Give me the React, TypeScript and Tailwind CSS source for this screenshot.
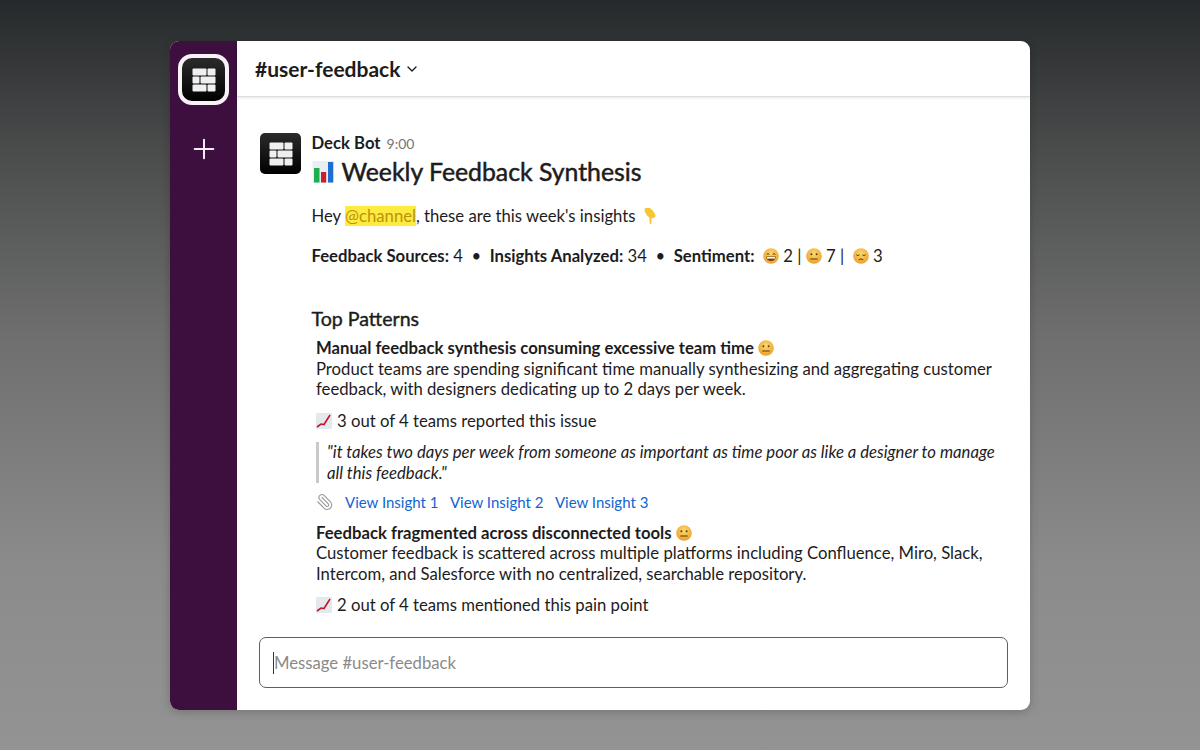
import React from "react";
import { ChevronDown, Paperclip, Plus } from "lucide-react";

// brick logo used in the workspace button and the bot avatar
const BrickLogo = ({ size }: { size: number }) => (
  <svg width={size} height={size} viewBox="0 0 24 24" fill="#f0f0f0">
    <rect x="0.5" y="0.5" width="14" height="7" rx="1" />
    <rect x="15.5" y="0.5" width="8" height="7" rx="1" />
    <rect x="0.5" y="8.5" width="7" height="7" rx="1" />
    <rect x="8.5" y="8.5" width="15" height="7" rx="1" />
    <rect x="0.5" y="16.5" width="14" height="7" rx="1" />
    <rect x="15.5" y="16.5" width="8" height="7" rx="1" />
  </svg>
);

const BarChartEmoji = ({ size = 22 }: { size?: number }) => (
  <svg width={size} height={size} viewBox="0 0 22 22" className="inline-block shrink-0">
    <rect x="0.5" y="0" width="21.5" height="22" fill="#e9eef3" />
    <rect x="2" y="7" width="5.5" height="14.5" fill="#1fae4e" />
    <rect x="9" y="11" width="5.2" height="10.5" fill="#c8202c" />
    <rect x="16" y="1" width="5.2" height="20.5" fill="#1f6fd0" />
  </svg>
);

const TrendEmoji = () => (
  <svg width="16" height="16" viewBox="0 0 16 16" className="inline-block shrink-0">
    <rect width="16" height="16" fill="#e4e9ee" />
    <path d="M1 14 L5 11 L8 11.5 L14 2" fill="none" stroke="#c2182b" strokeWidth="1.6" />
  </svg>
);

const Face = ({ kind }: { kind: "grin" | "neutral" | "pensive" }) => (
  <svg width="16" height="16" viewBox="0 0 16 16" className="inline-block shrink-0">
    <defs>
      <radialGradient id={`face-${kind}`} cx="50%" cy="35%" r="70%">
        <stop offset="0%" stopColor="#fbd971" />
        <stop offset="100%" stopColor="#ec9b22" />
      </radialGradient>
    </defs>
    <circle cx="8" cy="8" r="7.8" fill={`url(#face-${kind})`} />
    {kind === "grin" && (
      <>
        <path d="M3.6 6.4 Q5 4.8 6.4 6.4 M9.6 6.4 Q11 4.8 12.4 6.4" fill="none" stroke="#5b3a12" strokeWidth="1" />
        <path d="M3.2 8.6 H12.8 Q12.4 13 8 13 Q3.6 13 3.2 8.6Z" fill="#6b3d14" />
        <path d="M4 9 H12 V10.6 H4Z" fill="#fff" />
      </>
    )}
    {kind === "neutral" && (
      <>
        <circle cx="5.4" cy="6.2" r="1" fill="#5b3a12" />
        <circle cx="10.6" cy="6.2" r="1" fill="#5b3a12" />
        <rect x="4.2" y="10.4" width="7.6" height="1" rx="0.5" fill="#5b3a12" />
      </>
    )}
    {kind === "pensive" && (
      <>
        <path d="M3.4 6.8 Q5 8.4 6.6 6.8 M9.4 6.8 Q11 8.4 12.6 6.8" fill="none" stroke="#5b3a12" strokeWidth="1" />
        <path d="M5.8 11.6 Q8 10.4 10.2 11.6" fill="none" stroke="#5b3a12" strokeWidth="1" />
      </>
    )}
  </svg>
);

const PointDown = () => (
  <svg width="12" height="18" viewBox="0 0 12 18" className="inline-block shrink-0">
    <path
      d="M1 1 H6 Q10 4 11.5 8 Q11.5 11 9 11 L7.6 11 L7.3 16.8 Q6.6 18 5.8 16.8 L5.2 10.5 Q2 8 0.5 4 Z"
      fill="#f8c533"
    />
  </svg>
);

const Pattern = ({
  title,
  body,
  stat,
}: {
  title: string;
  body: string;
  stat: string;
}) => (
  <>
    <div className="flex items-center gap-[4px] font-bold">
      <span>{title}</span>
      <Face kind="neutral" />
    </div>
    <p className="w-[690px]">{body}</p>
    <div className="mt-[11px] flex items-center gap-[5px]">
      <TrendEmoji />
      <span>{stat}</span>
    </div>
  </>
);

export default function App() {
  return (
    <div className="h-[750px] w-[1200px] overflow-hidden bg-[linear-gradient(180deg,#26292b_0%,#4a4c4c_20%,#6f6f6f_45%,#8b8b8b_75%,#939393_100%)] pt-[41px] pl-[170px] font-['Lato','Liberation_Sans',sans-serif] text-[#1d1c1d]">
      <div className="flex h-[669px] w-[860px] overflow-hidden rounded-[9px] bg-white shadow-[0_2px_10px_rgba(0,0,0,0.2)]">
        {/* Workspace rail */}
        <aside className="flex w-[67px] shrink-0 flex-col items-center bg-[#3c0f3f] pt-[13px]">
          <div className="flex h-[51px] w-[51px] items-center justify-center rounded-[14px] border-[4px] border-[#f8f1f8] bg-[linear-gradient(180deg,#2b2b2b,#000000)]">
            <BrickLogo size={24} />
          </div>
          <Plus size={32} strokeWidth={1.5} className="mt-[28px] text-[#f3ecf3]" />
        </aside>

        <main className="flex min-w-0 flex-1 flex-col">
          <header className="flex h-[56px] shrink-0 items-center gap-[4px] border-b border-[#dedede] pl-[18px] shadow-[0_1px_3px_rgba(0,0,0,0.1)]">
            <span className="text-[21px] font-bold">#user-feedback</span>
            <ChevronDown size={16} strokeWidth={2} className="mt-[1px]" />
          </header>

          <div className="flex h-[540px] shrink-0 overflow-hidden pt-[36px] pl-[23px] text-[16.7px] leading-[20.5px]">
            <div className="flex h-[41px] w-[41px] shrink-0 items-center justify-center rounded-[5px] bg-[linear-gradient(180deg,#2b2b2b,#000000)]">
              <BrickLogo size={24} />
            </div>

            <div className="ml-[10.5px] min-w-0 flex-1">
              <div className="flex items-baseline gap-[6px]">
                <span className="font-bold">Deck Bot</span>
                <span className="text-[14px] text-[#767676]">9:00</span>
              </div>
              <div className="mt-[2px] flex items-center gap-[8px] text-[24.8px] leading-[30px] [-webkit-text-stroke:0.5px_#1d1c1d]">
                <BarChartEmoji />
                <span>Weekly Feedback Synthesis</span>
              </div>

              <div className="mt-[19px] flex items-center">
                <span>Hey&nbsp;</span>
                <span className="bg-[#fdeb3f] text-[#bd920c]">@channel</span>
                <span>, these are this week's insights&nbsp;&nbsp;</span>
                <PointDown />
              </div>

              <div className="mt-[20px] flex items-center whitespace-pre">
                <b>Feedback Sources:</b>
                <span> 4  •  </span>
                <b>Insights Analyzed:</b>
                <span> 34  •  </span>
                <b>Sentiment:</b>
                <span>  </span>
                <Face kind="grin" />
                <span> 2 | </span>
                <Face kind="neutral" />
                <span> 7 |  </span>
                <Face kind="pensive" />
                <span> 3</span>
              </div>

              <h2 className="mt-[40px] text-[19.6px] leading-[24px] [-webkit-text-stroke:0.4px_#1d1c1d]">Top Patterns</h2>

              <div className="mt-[7.5px] pl-[4.5px]">
                <Pattern
                  title="Manual feedback synthesis consuming excessive team time"
                  body="Product teams are spending significant time manually synthesizing and aggregating customer feedback, with designers dedicating up to 2 days per week."
                  stat="3 out of 4 teams reported this issue"
                />

                <blockquote className="mt-[11px] w-[690px] border-l-[3px] border-[#c9c9c9] pl-[8px] italic">
                  "it takes two days per week from someone as important as time poor as like a designer to manage all this feedback."
                </blockquote>

                <div className="mt-[9px] flex items-center text-[15px] text-[#1264d3]">
                  <Paperclip size={18} strokeWidth={1.5} className="mr-[11px] -scale-x-100 text-[#9a9a9a]" />
                  <span>View Insight 1</span>
                  <span className="ml-[11.5px]">View Insight 2</span>
                  <span className="ml-[11.5px]">View Insight 3</span>
                </div>

                <div className="mt-[10px]">
                  <Pattern
                    title="Feedback fragmented across disconnected tools"
                    body="Customer feedback is scattered across multiple platforms including Confluence, Miro, Slack, Intercom, and Salesforce with no centralized, searchable repository."
                    stat="2 out of 4 teams mentioned this pain point"
                  />
                </div>
              </div>
            </div>
          </div>

          <div className="ml-[22px] flex h-[51px] w-[749px] shrink-0 items-center self-start rounded-[7px] border-[1.5px] border-[#5f5f5f] pl-[13px] text-[16.7px]">
            <span className="h-[22px] w-px bg-[#333333]" />
            <span className="mt-[2px] text-[#8a8a8a]">Message #user-feedback</span>
          </div>
        </main>
      </div>
    </div>
  );
}
